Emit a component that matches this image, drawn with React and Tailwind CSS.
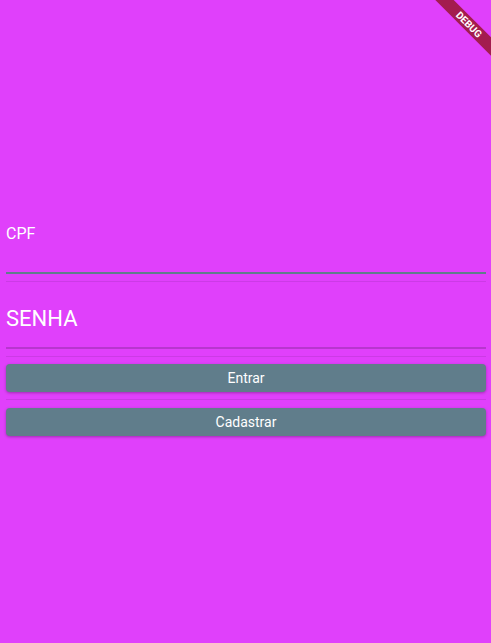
export default function App() {
  return (
    <div className="relative h-[643px] w-[491px] overflow-hidden bg-[#e040fb] font-['Roboto',sans-serif] text-white">
      <div className="flex flex-col pl-[6px] pr-[5px] pt-[224px]">
        <div className="h-[48px] text-[16px] leading-[19px]">CPF</div>
        <div className="h-[2px] bg-[#607d8b]" />
        <div className="mt-[7px] h-px bg-[#cc3ae6]" />
        <div className="mt-[24px] h-[26px] text-[22px] leading-[26px]">SENHA</div>
        <div className="mt-[15px] h-[2px] bg-[#b836cf]" />
        <div className="mt-[7px] h-px bg-[#cc3ae6]" />
        <button className="mt-[7px] h-[28px] rounded-[4px] bg-[#607d8b] text-[14px] shadow-[0_1px_3px_rgba(0,0,0,0.3)]">
          Entrar
        </button>
        <div className="mt-[7px] h-px bg-[#cc3ae6]" />
        <button className="mt-[8px] h-[28px] rounded-[4px] bg-[#607d8b] text-[14px] shadow-[0_1px_3px_rgba(0,0,0,0.3)]">
          Cadastrar
        </button>
      </div>
      <div className="absolute right-[-36px] top-[18px] w-[116px] rotate-45 bg-[#a31c4f] text-center text-[10px] font-bold leading-[13px]">
        DEBUG
      </div>
    </div>
  );
}
